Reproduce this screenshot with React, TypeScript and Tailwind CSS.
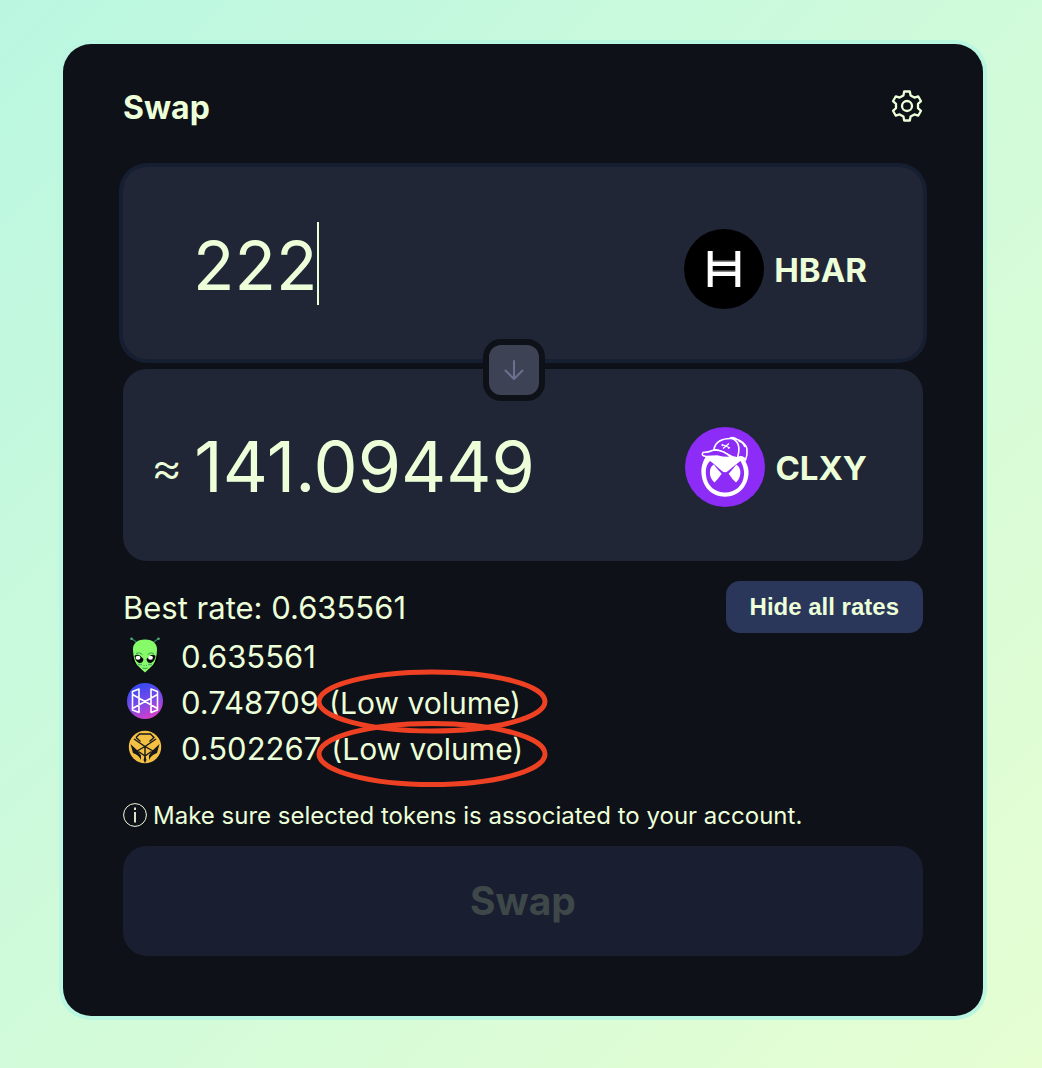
import { useState } from "react";

function GearIcon() {
  return (
    <svg viewBox="0 0 32 32" className="size-8" fill="none" stroke="currentColor" strokeWidth="2.300" strokeLinejoin="round" aria-hidden="true">
      <path d="M13.200 1.500H18.800L19.600 5.400L23.400 7.600L27.200 6.300L30 11.200L27 13.800V18.200L30 20.800L27.200 25.700L23.400 24.400L19.600 26.600L18.800 30.500H13.200L12.400 26.600L8.600 24.400L4.800 25.700L2 20.800L5 18.200V13.800L2 11.200L4.800 6.300L8.600 7.600L12.400 5.400Z" />
      <circle cx="16" cy="16" r="5" />
    </svg>
  );
}

function HbarLogo() {
  return (
    <svg viewBox="0 0 80 80" className="size-20 shrink-0" aria-hidden="true">
      <circle cx="40" cy="40" r="40" fill="#000" />
      <path d="M28 32.500h24v4.500H28zM28 42.500h24v4.500H28z" fill="#fff" />
      <path d="M28.500 32h23M28.500 42h23" stroke="#888" />
      <path d="M23.700 22h5v36h-5zM51.300 22h5v36h-5z" fill="#fff" />
    </svg>
  );
}

function ClxyLogo() {
  return (
    <svg viewBox="0 0 80 80" className="size-20 shrink-0" aria-hidden="true">
      <circle cx="40" cy="40" r="40" fill="#8c2cf6" />
      <path d="M22 28C17 35 16 41 16.500 47C17.500 60 27 69.700 40 69.700S62.500 60 63.500 47C64 41 62 36 58 31L46 27Z" fill="#fff" />
      <path d="M25 34C21 38 20.500 43 21 48C22 59 30 65.500 40 65.500S58 59 59 48C59.400 43 58 38 55.500 34C51 37 47 41 43 44Q40 46.500 37 44C33 41 29 36.500 25 34Z" fill="#8c2cf6" />
      <path d="M28.800 37.500Q25.500 39.500 25 43.500Q24 51 29.500 55.500Q33 52 36.700 46.700Q32 42 28.800 37.500ZM51.400 37.500Q48 42 43.700 46.700Q47 52 51 55.500Q56 51 55.300 43.500Q54.500 39.500 51.400 37.500Z" fill="#fff" />
      <path d="M29 22.500C30 15 37 11 47 11.500C56 12 62 18 62 23Q62.500 28 60.500 33C58 29 55 29.500 52.500 31Q46 30 42 27Q36 23 29 22.500Z" fill="#8c2cf6" stroke="#fff" strokeWidth="1.600" />
      <path d="M29 23Q23 25.500 18 25.500Q15.500 29 21.500 29.500L32 29Q39 31 46 30.500Q39 23 29 23Z" fill="#8c2cf6" stroke="#fff" strokeWidth="1.600" />
      <path d="M47 11.500C54 14 55 22 52.500 31M45 11Q48 9.500 51.500 12M53.500 14Q58 15 60 20" fill="none" stroke="#fff" strokeWidth="1.600" />
      <path d="M37 17.500L44 20.500M44 16.500L38 21.500M37.500 17L37 19M43 21.500L45 20.500" fill="none" stroke="#fff" strokeWidth="1.300" />
    </svg>
  );
}

function AlienIcon() {
  return (
    <svg viewBox="0 0 36 36" className="size-9" aria-hidden="true">
      <path d="M11 7L8 4 5 2M25 7L28 4 31 2" fill="none" stroke="#2e7d62" strokeWidth="1.500" />
      <circle cx="4.500" cy="1.800" r="1.300" fill="#4fb477" />
      <circle cx="31.500" cy="1.800" r="1.300" fill="#4fb477" />
      <path d="M5.500 18Q4 23 8 27L14 33H22L28 27Q32 23 30.500 18Z" fill="#000" />
      <path d="M18 2.500C9.500 2.500 5.500 7.500 6 13C6.300 19 7 24 10 28Q15 33 18 35.500Q21 33 26 28C29 24 29.700 19 30 13C30.500 7.500 26.500 2.500 18 2.500Z" fill="#86fa68" />
      <path d="M7.500 19Q11 15.500 16.500 22Q16 26.500 12 26Q8 24 7.500 19ZM28.500 19Q25 15.500 19.500 22Q20 26.500 24 26Q28 24 28.500 19Z" fill="#050708" />
      <ellipse cx="11" cy="20.800" rx="2.400" ry="2" fill="#fff" />
      <ellipse cx="23.500" cy="20.800" rx="2.400" ry="2" fill="#fff" />
      <path d="M9 16.500Q12 14.500 15.500 17.500M27 16.500Q24 14.500 20.500 17.500M16.500 28.500h1M19 28.500h1M15.500 31Q18 32 20.500 31" fill="none" stroke="#3b9c57" />
      <path d="M11 27.500h4M21 27.500h4" stroke="#55ad76" strokeWidth="1.500" />
    </svg>
  );
}

function HashIcon() {
  return (
    <svg viewBox="0 0 36 36" className="size-9" aria-hidden="true">
      <defs>
        <linearGradient id="hash" x1="0.300" y1="0" x2="0.700" y2="1">
          <stop offset="0.100" stopColor="#3d49f2" />
          <stop offset="0.550" stopColor="#7f4ae8" />
          <stop offset="1" stopColor="#dd3dc4" />
        </linearGradient>
      </defs>
      <circle cx="18" cy="18" r="18" fill="url(#hash)" />
      <path d="M5.500 8.500L12 6V29.500L5.500 27ZM30.500 8.500L24 6V29.500L30.500 27ZM5.500 11.500L30.500 25.500M30.500 11.500L5.500 25.500" fill="none" stroke="#fff" strokeWidth="1.600" strokeLinejoin="round" />
    </svg>
  );
}

function GoldIcon() {
  return (
    <svg viewBox="0 0 36 36" className="size-9" aria-hidden="true">
      <circle cx="18" cy="18" r="16.200" fill="#f3c044" />
      <g fill="none" stroke="#15171b" strokeWidth="1.400" strokeLinejoin="round">
        <path d="M9 8.500L12.500 5H23.500L27 8.500L22.500 12.500M9 8.500L13.500 12.500" />
        <path d="M7 10L18 17.500L29 10M18 17.500V32M10 22L18 17.500L26 22M11.500 22.500L18 27L24.500 22.500" />
      </g>
      <path d="M3.500 15L10.500 21.500L14 26.500V31Q12 26 6 24ZM32.500 15L25.500 21.500L22 26.500V31Q24 26 30 24ZM18 27L19.500 31L18 34L16.500 31Z" fill="#15171b" />
    </svg>
  );
}

const rates = [
  { name: "alien", value: "0.635561", low: false, Icon: AlienIcon },
  { name: "hash", value: "0.748709", low: true, Icon: HashIcon },
  { name: "gold", value: "0.502267", low: true, Icon: GoldIcon },
];

function VolumeMarks() {
  return (
    <svg
      viewBox="0 0 232 120"
      className="pointer-events-none absolute top-[35px] left-[193px] h-[120px] w-[232px]"
      fill="none"
      stroke="#ee4023"
      strokeWidth="5"
      aria-hidden="true"
    >
      <ellipse cx="116" cy="33.500" rx="113" ry="29.500" />
      <ellipse cx="116" cy="86" rx="113" ry="30.500" />
    </svg>
  );
}

export default function App() {
  const [amount, setAmount] = useState("222");
  return (
    <div className="min-h-screen bg-linear-135 from-[#baf7e1] to-[#e6fed2] pt-11 pr-[59px] pb-[52px] pl-[63px] font-['Inter',sans-serif] text-[#ecffd8]">
      <main className="rounded-[28px] bg-[#0e1118] px-[60px] pt-[42px] pb-[60px] shadow-[0_0_0_4px_#baf7e1]">
        <header className="flex h-10 items-center justify-between">
          <h1 className="pt-1 text-[32px] font-bold">Swap</h1>
          <button type="button" aria-label="Settings">
            <GearIcon />
          </button>
        </header>

        <section className="relative mt-[41px] flex flex-col gap-2.5">
          <div className="flex h-48 items-center justify-between rounded-[24px] bg-[#212637] pr-14 pl-[70px] shadow-[0_0_0_4px_#161e31]">
            <div className="flex items-center">
              <input
                aria-label="Amount to swap"
                value={amount}
                onChange={(e) => setAmount(e.target.value)}
                className="field-sizing-content bg-transparent pt-1 text-[68px] leading-[84px] caret-transparent outline-none"
              />
              <span className="h-[83px] w-0.5 bg-[#ecffd8]" />
            </div>
            <button type="button" className="flex items-center gap-2.5 pt-3 text-[33px] font-bold">
              <HbarLogo />
              <span className="pt-1">HBAR</span>
            </button>
          </div>
          <button
            type="button"
            aria-label="Switch tokens"
            className="absolute top-[172px] left-1/2 -ml-10 flex size-[62px] items-center justify-center rounded-[18px] border-6 border-[#0e1118] bg-[#3d4255] text-[#6a7191]"
          >
            <svg viewBox="0 0 20 20" className="size-5" fill="none" stroke="currentColor" strokeWidth="2" strokeLinecap="round" strokeLinejoin="round">
              <path d="M10 1v18M1.500 10.500L10 19l8.500-8.500" />
            </svg>
          </button>
          <div className="flex h-48 items-center justify-between rounded-[24px] bg-[#212637] pt-1 pr-14 pl-7">
            <div className="flex items-center gap-3">
              <span className="text-[48px] leading-[84px] font-light">≈</span>
              <output className="text-[70px] leading-[84px]">141.09449</output>
            </div>
            <button type="button" className="flex items-center gap-2.5 text-[33px] font-bold">
              <ClxyLogo />
              <span className="pt-1">CLXY</span>
            </button>
          </div>
        </section>

        <section className="mt-5">
          <div className="flex h-[52px] items-center justify-between">
            <p className="pt-0.5 text-[31px]">Best rate: 0.635561</p>
            <button type="button" className="h-[52px] rounded-[14px] bg-[#2a365a] px-6 font-['Liberation_Sans',sans-serif] text-[24px] font-bold">
              Hide all rates
            </button>
          </div>
          <ul className="relative">
            {rates.map(({ name, value, low, Icon }) => (
              <li key={name} className="flex h-[46px] items-center pb-0.5 pl-1 text-[31px]">
                <Icon />
                <span className="pt-1 pl-[18px]">{value}</span>
                {low && <span className="pt-1 pl-2.5 text-[30px]">(Low volume)</span>}
              </li>
            ))}
            <VolumeMarks />
          </ul>
        </section>

        <p className="mt-[26px] flex h-9 items-center gap-1.5 text-[24px]">
          <svg viewBox="0 0 24 24" className="size-6" fill="none" stroke="currentColor" aria-hidden="true">
            <circle cx="12" cy="12" r="11.400" />
            <path d="M12 9V19.500M12 4.500v2.400" strokeWidth="1.800" />
          </svg>
          <span className="pt-0.5">Make sure selected tokens is associated to your account.</span>
        </p>
        <button type="button" disabled className="mt-[13px] h-[110px] w-full rounded-[24px] bg-[#191e31] text-[39px] font-bold text-[#3f4849]">
          Swap
        </button>
      </main>
    </div>
  );
}
